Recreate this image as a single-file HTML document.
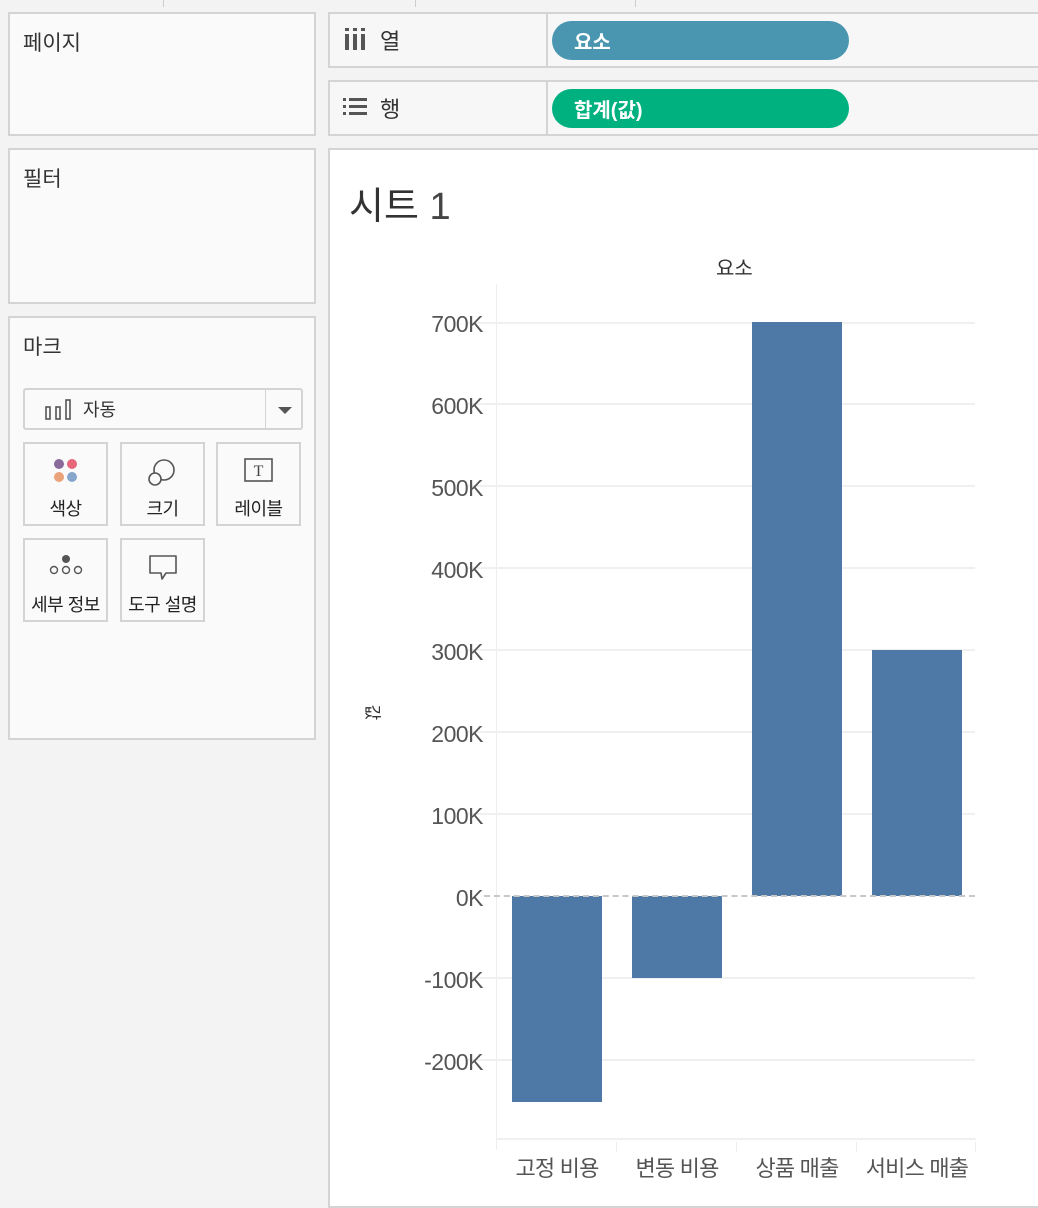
<!DOCTYPE html>
<html><head><meta charset="utf-8"><style>
*{margin:0;padding:0;box-sizing:border-box}
body{width:1038px;height:1198px;background:#f3f3f3;position:relative;overflow:hidden;font-family:"Liberation Sans","Noto Sans CJK KR",sans-serif;color:#333}
.a{position:absolute}
.panel{position:absolute;background:#fafafa;border:2px solid #d4d4d4}
.pt{position:absolute;left:13px;top:13px;font-size:21px;color:#333}
.btn{position:absolute;width:85px;height:84px;border:2px solid #d4d4d4;background:#fafafa;text-align:center}
.btn .l{position:absolute;left:0;right:0;top:51px;font-size:18px;color:#222;letter-spacing:-0.5px}
.yl{position:absolute;right:555px;font-size:23px;color:#555;text-align:right;line-height:20px;letter-spacing:-0.5px}
.gl{position:absolute;left:468px;width:507px;height:2px;background:#f0f0f0}
.bar{position:absolute;background:#4e79a7;width:90px}
.cl{position:absolute;top:1151px;font-size:22px;color:#555;width:120px;text-align:center;letter-spacing:-0.8px}
</style></head><body>
<div class="a" style="left:163px;top:0;width:1px;height:7px;background:#ccc"></div>
<div class="a" style="left:415px;top:0;width:1px;height:7px;background:#ccc"></div>
<div class="a" style="left:635px;top:0;width:1px;height:7px;background:#ccc"></div>

<div class="panel" style="left:8px;top:12px;width:308px;height:124px"><div class="pt">페이지</div></div>
<div class="panel" style="left:8px;top:148px;width:308px;height:156px"><div class="pt">필터</div></div>
<div class="panel" style="left:8px;top:316px;width:308px;height:424px"><div class="pt" style="top:13px">마크</div>
  <div class="a" style="left:13px;top:70px;width:280px;height:42px;border:2px solid #d4d4d4;border-radius:3px;background:#fafafa">
    <svg class="a" style="left:20px;top:8px" width="28" height="24"><g fill="none" stroke="#555" stroke-width="1.6"><rect x="1" y="9" width="4" height="12"/><rect x="11" y="9" width="4" height="12"/><rect x="21" y="2" width="4" height="19"/></g></svg>
    <div class="a" style="left:58px;top:6px;font-size:18px">자동</div>
    <div class="a" style="left:240px;top:0;width:1px;height:38px;background:#d4d4d4"></div>
    <div class="a" style="left:253px;top:17px;width:0;height:0;border-left:7px solid transparent;border-right:7px solid transparent;border-top:7px solid #555"></div>
  </div>
  <div class="btn" style="left:13px;top:124px"><svg class="a" style="left:28px;top:14px" width="28" height="28"><circle cx="6" cy="6" r="5" fill="#8a6a9a"/><circle cx="19" cy="6" r="5" fill="#e8677a"/><circle cx="6" cy="19" r="5" fill="#eaa27a"/><circle cx="19" cy="19" r="5" fill="#86a6cc"/></svg><div class="l">색상</div></div>
  <div class="btn" style="left:110px;top:124px"><svg class="a" style="left:24px;top:13px" width="32" height="30"><g fill="none" stroke="#555" stroke-width="1.6"><circle cx="18" cy="13" r="10"/><circle cx="9" cy="22" r="6" fill="#fafafa"/></g></svg><div class="l">크기</div></div>
  <div class="btn" style="left:206px;top:124px"><svg class="a" style="left:26px;top:14px" width="30" height="26"><rect x="1" y="1" width="27" height="22" fill="none" stroke="#555" stroke-width="1.6"/><text x="14.5" y="18" font-family="Liberation Serif" font-size="16" text-anchor="middle" fill="#444">T</text></svg><div class="l">레이블</div></div>
  <div class="btn" style="left:13px;top:220px"><svg class="a" style="left:24px;top:14px" width="34" height="22"><circle cx="17" cy="5" r="4" fill="#555"/><g fill="none" stroke="#555" stroke-width="1.4"><circle cx="5" cy="16" r="3.5"/><circle cx="17" cy="16" r="3.5"/><circle cx="29" cy="16" r="3.5"/></g></svg><div class="l">세부 정보</div></div>
  <div class="btn" style="left:110px;top:220px"><svg class="a" style="left:26px;top:14px" width="32" height="28"><path d="M2 2H28V19H18L14 25L13 19H2Z" fill="none" stroke="#555" stroke-width="1.6" stroke-linejoin="round"/></svg><div class="l">도구 설명</div></div>
</div>

<div class="panel" style="left:328px;top:12px;width:720px;height:56px;background:#f7f7f7">
  <svg class="a" style="left:14px;top:14px" width="24" height="24"><g fill="#555"><rect x="1" y="0" width="4" height="3"/><rect x="9" y="0" width="4" height="3"/><rect x="17" y="0" width="4" height="3"/><rect x="1" y="6" width="4" height="16"/><rect x="9" y="6" width="4" height="16"/><rect x="17" y="6" width="4" height="16"/></g></svg>
  <div class="a" style="left:50px;top:10px;font-size:22px">열</div>
  <div class="a" style="left:216px;top:0;width:2px;height:52px;background:#d4d4d4"></div>
  <div class="a" style="left:222px;top:7px;width:297px;height:39px;border-radius:20px;background:#4a96b1;color:#fff;font-size:20px;font-weight:bold;padding:5px 0 0 22px">요소</div>
</div>
<div class="panel" style="left:328px;top:80px;width:720px;height:56px;background:#f7f7f7">
  <svg class="a" style="left:13px;top:15px" width="26" height="22"><g fill="#555"><rect x="0" y="1" width="3" height="3"/><rect x="6" y="1" width="18" height="3"/><rect x="0" y="8" width="3" height="3"/><rect x="6" y="8" width="18" height="3"/><rect x="0" y="15" width="3" height="3"/><rect x="6" y="15" width="18" height="3"/></g></svg>
  <div class="a" style="left:50px;top:10px;font-size:22px">행</div>
  <div class="a" style="left:216px;top:0;width:2px;height:52px;background:#d4d4d4"></div>
  <div class="a" style="left:222px;top:7px;width:297px;height:39px;border-radius:20px;background:#00b180;color:#fff;font-size:20px;font-weight:bold;padding:5px 0 0 22px">합계(값)</div>
</div>

<div class="a" style="left:328px;top:148px;width:720px;height:1060px;background:#fff;border:2px solid #d4d4d4"></div>
<div class="a" style="left:349px;top:175px;font-size:38px;color:#333">시트 <span style="font-weight:300;color:#444">1</span></div>
<div class="a" style="left:716px;top:252px;font-size:20px;color:#333">요소</div>
<div class="a" style="left:366px;top:700px;font-size:17px;color:#333;transform:rotate(90deg)">값</div>

<div class="a" style="left:496px;top:284px;width:1px;height:866px;background:#eee"></div>
<div class="gl" style="top:322px"></div><div class="gl" style="top:403px"></div><div class="gl" style="top:485px"></div><div class="gl" style="top:567px"></div><div class="gl" style="top:649px"></div><div class="gl" style="top:731px"></div><div class="gl" style="top:813px"></div><div class="gl" style="top:977px"></div><div class="gl" style="top:1059px"></div>
<div class="a" style="left:496px;top:1138px;width:480px;height:2px;background:#f0f0f0"></div>
<div class="a" style="left:616px;top:1142px;width:1px;height:10px;background:#eee"></div>
<div class="a" style="left:736px;top:1142px;width:1px;height:10px;background:#eee"></div>
<div class="a" style="left:856px;top:1142px;width:1px;height:10px;background:#eee"></div>
<div class="a" style="left:975px;top:1142px;width:1px;height:10px;background:#eee"></div>

<div class="bar" style="left:512px;top:896px;height:206px"></div>
<div class="bar" style="left:632px;top:896px;height:82px"></div>
<div class="bar" style="left:752px;top:322px;height:574px"></div>
<div class="bar" style="left:872px;top:650px;height:246px"></div>
<div class="a" style="left:484px;top:895px;width:491px;border-top:2px dashed #c8c8c8"></div>

<div class="yl" style="top:314px">700K</div><div class="yl" style="top:396px">600K</div><div class="yl" style="top:478px">500K</div><div class="yl" style="top:560px">400K</div><div class="yl" style="top:642px">300K</div><div class="yl" style="top:724px">200K</div><div class="yl" style="top:806px">100K</div><div class="yl" style="top:888px">0K</div><div class="yl" style="top:970px">-100K</div><div class="yl" style="top:1052px">-200K</div>

<div class="cl" style="left:497px">고정 비용</div>
<div class="cl" style="left:617px">변동 비용</div>
<div class="cl" style="left:737px">상품 매출</div>
<div class="cl" style="left:857px">서비스 매출</div>
</body></html>
